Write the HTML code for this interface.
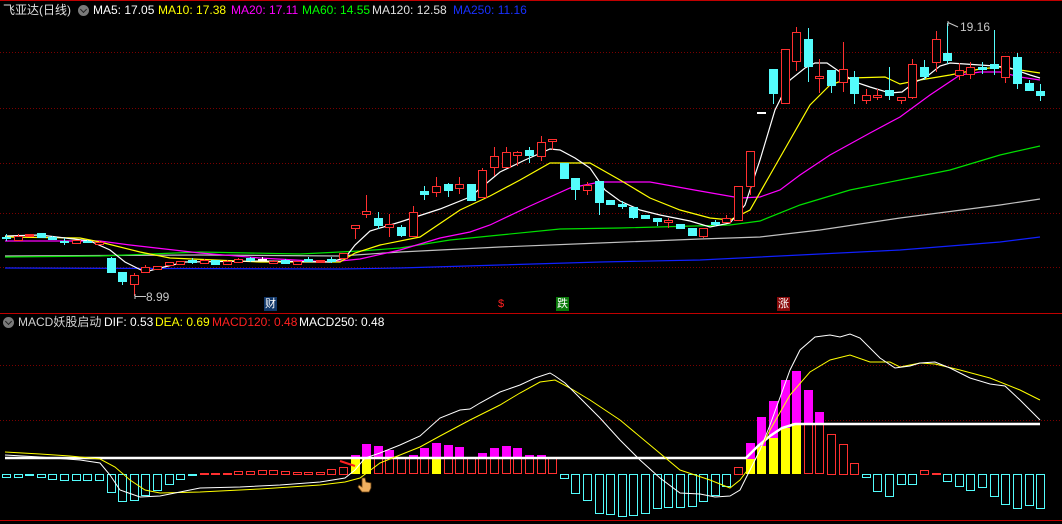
<!DOCTYPE html>
<html><head><meta charset="utf-8">
<style>
html,body{margin:0;padding:0;background:#000;width:1062px;height:524px;overflow:hidden;}
#wrap{position:relative;width:1062px;height:524px;font-family:"Liberation Sans","Noto Sans CJK SC",sans-serif;font-size:12px;}
svg{position:absolute;left:0;top:0;}
.t{position:absolute;white-space:nowrap;line-height:14px;}
.ic{position:absolute;width:11px;height:11px;border-radius:50%;background:#7a7a7a;}
.ic:after{content:"";position:absolute;left:3px;top:2px;width:4px;height:4px;border-right:1.5px solid #222;border-bottom:1.5px solid #222;transform:rotate(45deg);}
.box{position:absolute;width:13px;height:14px;color:#fff;font-size:11px;line-height:14px;text-align:center;}
</style></head><body>
<div id="wrap">
<svg id="s" width="1062" height="524" viewBox="0 0 1062 524"></svg>
<div class="t" style="left:3px;top:3px;color:#e0e0e0;">飞亚达(日线)</div>
<div class="ic" style="left:78px;top:5px;"></div>
<div class="t" style="left:93px;top:3px;color:#fff;">MA5: 17.05</div>
<div class="t" style="left:158px;top:3px;color:#ffff00;">MA10: 17.38</div>
<div class="t" style="left:231px;top:3px;color:#ff00ff;">MA20: 17.11</div>
<div class="t" style="left:302px;top:3px;color:#00ff00;">MA60: 14.55</div>
<div class="t" style="left:372px;top:3px;color:#e0e0e0;">MA120: 12.58</div>
<div class="t" style="left:453px;top:3px;color:#1830ff;">MA250: 11.16</div>
<div class="t" style="left:960px;top:20px;color:#c8c8c8;">19.16</div>
<div class="t" style="left:146px;top:290px;color:#c8c8c8;">8.99</div>
<div class="box" style="left:264px;top:297px;background:#12386a;">财</div>
<div class="box" style="left:556px;top:297px;background:#0a7a0a;">跌</div>
<div class="box" style="left:777px;top:297px;background:#8a0a0a;">涨</div>
<div class="t" style="left:498px;top:297px;color:#ff2020;font-size:11px;">$</div>
<div class="ic" style="left:3px;top:317px;"></div>
<div class="t" style="left:18px;top:315px;color:#d0d0d0;">MACD妖股启动</div>
<div class="t" style="left:104px;top:315px;color:#fff;">DIF: 0.53</div>
<div class="t" style="left:155px;top:315px;color:#ffff00;">DEA: 0.69</div>
<div class="t" style="left:212px;top:315px;color:#ff2020;">MACD120: 0.48</div>
<div class="t" style="left:299px;top:315px;color:#fff;">MACD250: 0.48</div>
</div>
<script>
var S=document.getElementById('s'),h='';
function L(x1,y1,x2,y2,c,w,d){h+='<line x1="'+x1+'" y1="'+y1+'" x2="'+x2+'" y2="'+y2+'" stroke="'+c+'" stroke-width="'+(w||1)+'"'+(d?' stroke-dasharray="'+d+'"':'')+'/>';}
function R(x,y,w,hh,f,s){h+='<rect x="'+x+'" y="'+y+'" width="'+w+'" height="'+Math.max(hh,1)+'" fill="'+(f||'none')+'"'+(s?' stroke="'+s+'" stroke-width="1"':'')+'/>';}
function P(pts,c,w){h+='<polyline fill="none" stroke="'+c+'" stroke-width="'+(w||1)+'" points="'+pts.map(function(p){return p.join(',')}).join(' ')+'"/>';}
L(0,0.5,1062,0.5,'#c00000',1);
L(0,313.5,1062,313.5,'#c00000',1);
L(0,520.5,1062,520.5,'#c00000',1);
[52,108,163,213,267,365,420].forEach(function(y){L(0,y+.5,1062,y+.5,'#7a0000',1,'1,2');});
function X(k){return 6+11.62*k;}
var RC='#ff3030',CC='#54fcfc';
var C=[[237,238,234,241,'c'],[236,240,234,241,'r'],[234,236,234,236,'rf'],[233,237,233,238,'c'],[237,239,236,240,'c'],[241,242,238,245,'c'],[240,243,240,243,'r'],[241,242,240,243,'c'],[242,244,241,244,'r'],[258,272,257,272,'c'],
[272,281,272,285,'c'],[275,284,273,296,'r'],[267,272,265,272,'r'],[266,269,266,269,'r'],[262,265,262,265,'r'],[261,264,261,264,'r'],[260,262,258,264,'c'],[260,263,259,264,'r'],[260,264,260,264,'c'],[261,264,260,265,'r'],
[259,262,258,262,'r'],[258,260,257,262,'c'],[259,260,257,261,'w'],[261,263,260,263,'r'],[260,263,259,263,'c'],[261,264,261,264,'r'],[259,261,257,262,'c'],[260,262,260,262,'rf'],[259,261,257,263,'c'],[253,258,253,259,'r'],
[225,228,225,239,'r'],[211,214,195,218,'r'],[218,225,212,229,'c'],[224,227,214,237,'r'],[227,235,225,237,'c'],[212,236,206,236,'r'],[191,194,186,200,'c'],[186,192,177,197,'r'],[184,190,183,197,'c'],[184,188,177,194,'r'],
[184,200,184,201,'c'],[170,197,168,197,'r'],[156,167,147,176,'r'],[152,167,147,167,'r'],[152,155,151,166,'r'],[150,155,147,163,'c'],[142,156,136,161,'r'],[139,141,139,150,'r'],[163,178,163,178,'c'],[178,189,178,200,'c'],
[185,190,182,195,'r'],[181,202,181,215,'c'],[200,204,200,205,'c'],[204,206,201,209,'c'],[207,217,207,219,'c'],[215,218,215,218,'c'],[218,221,218,226,'c'],[220,222,218,228,'r'],[224,228,224,228,'c'],[228,235,228,235,'c'],
[228,236,228,238,'r'],[222,224,220,226,'c'],[218,222,215,222,'r'],[186,220,186,220,'r'],[151,186,151,195,'r'],[112,113,112,113,'w'],[69,93,69,104,'c'],[49,103,49,103,'r'],[32,61,27,71,'r'],[39,66,28,82,'c'],
[76,78,59,93,'r'],[70,85,70,93,'c'],[69,82,42,92,'r'],[77,93,71,104,'c'],[95,100,89,104,'r'],[95,97,89,100,'r'],[90,95,67,100,'c'],[97,100,97,104,'r'],[64,97,59,99,'r'],[67,76,60,80,'c'],
[39,62,31,72,'r'],[53,60,23,64,'c'],[70,75,63,80,'r'],[67,74,62,79,'r'],[67,69,62,74,'c'],[64,68,30,75,'c'],[56,77,56,83,'r'],[57,83,53,89,'c'],[83,90,80,90,'c'],[91,95,84,101,'c']];
var MA=[
[[[5,236],[40,235],[90,241],[110,250],[125,262],[145,272],[160,268],[185,262],[260,261],[330,262],[345,258],[355,245],[370,231],[400,222],[440,209],[470,197],[500,172],[525,160],[550,149],[560,150],[575,158],[590,168],[605,190],[620,201],[640,210],[660,215],[690,221],[710,227],[730,223],[745,205],[760,160],[775,110],[790,80],[805,68],[815,63],[827,63],[840,72],[855,82],[870,87],[890,93],[902,92],[915,82],[925,78],[940,66],[950,63],[965,64],[995,66],[1010,68],[1030,75],[1040,78]],'#ffffff'],
[[[5,237],[80,238],[100,242],[140,252],[170,258],[260,262],[340,262],[355,253],[380,245],[420,237],[460,210],[490,196],[520,180],[550,163],[590,163],[620,180],[650,198],[680,210],[710,218],[730,220],[750,210],[770,175],[790,140],[810,105],[830,85],[850,78],[885,77],[900,84],[920,80],[950,75],[980,69],[1000,67],[1020,70],[1040,73]],'#ffff00'],
[[[5,241],[100,241],[130,245],[200,253],[260,258],[330,262],[360,259],[400,250],[440,238],[470,232],[490,225],[530,206],[570,188],[600,182],[650,182],[700,191],[740,198],[760,197],[780,190],[800,175],[830,155],[870,133],[900,117],[930,95],[960,75],[980,72],[1000,72],[1020,77],[1040,80]],'#ff00ff'],
[[[5,257],[100,256],[200,252],[300,254],[360,251],[400,248],[450,240],[500,235],[560,229],[620,228],[730,225],[760,221],[800,205],[850,190],[900,180],[950,170],[1000,155],[1040,146]],'#00e000'],
[[[5,256],[200,255],[340,256],[400,252],[500,247],[600,243],[700,239],[760,237],[820,230],[900,218],[1000,205],[1040,199]],'#c0c0c0'],
[[[5,268],[340,269],[400,268],[500,265],[600,262],[700,260],[800,255],[900,250],[1000,242],[1040,237]],'#1020ff']];
MA.slice().reverse().forEach(function(m){P(m[0],m[1],1.2);});
C.forEach(function(c,k){var x=Math.round(X(k)),t=c[0],b=c[1],hi=c[2],lo=c[3],ty=c[4];
 var col=ty=='c'?CC:ty=='w'?'#fff':RC;
 if(hi<t)L(x+.5,hi,x+.5,t,col);
 if(lo>b)L(x+.5,b,x+.5,lo,col);
 if(ty=='r')R(x-3.5,t+.5,8,b-t,'#000',col);
 else R(x-4,t,9,b-t+1,col);
});
// price markers
L(135,296.5,146,296.5,'#c8c8c8');L(135,294,135,299,'#c8c8c8');
L(948,22.5,958,27,'#c8c8c8');L(948,21,948,26,'#c8c8c8');
// MACD histogram
var H=[[0,'c',477],[1,'c',477],[2,'cf',476],[3,'c',477],[4,'c',479],[5,'c',480],[6,'c',480],[7,'c',480],[8,'c',480],[9,'c',492],[10,'c',501],[11,'c',500],[12,'c',495],[13,'c',490],[14,'c',484],[15,'c',479],[16,'cf',476],
[17,'r',473],[18,'rf',473],[19,'r',473],[20,'r',471],[21,'r',471],[22,'r',470],[23,'r',470],[24,'r',471],[25,'r',472],[26,'r',472],[27,'r',472],[28,'r',469],[29,'r',467],
[48,'c',478],[49,'c',493],[50,'c',500],[51,'c',513],[52,'c',514],[53,'c',516],[54,'c',515],[55,'c',513],[56,'c',508],[57,'c',507],[58,'c',507],[59,'c',506],[60,'c',501],[61,'c',495],[62,'c',486],[63,'r',467],
[71,'r',434],[72,'r',444],[73,'r',463],[74,'c',477],[75,'c',491],[76,'c',496],[77,'c',484],[78,'c',484],[79,'r',470],[80,'rf',473],[81,'c',481],[82,'c',486],[83,'c',490],[84,'c',487],[85,'c',496],[86,'c',504],[87,'c',508],[88,'c',505],[89,'c',508]];
H.forEach(function(b){var x=Math.round(X(b[0]))-4,ty=b[1],y=b[2];
 if(ty=='c')R(x+.5,474.5,8,y-474,'none',CC);
 else if(ty=='cf')R(x,474,9,y-474,CC);
 else if(ty=='r')R(x+.5,y+.5,8,474-y,'none',RC);
 else R(x,y,9,475-y,RC);
});
// mid section: magenta above line, red or yellow below
var M=[[30,455,'y'],[31,444,'y'],[32,446,'r'],[33,450,'r'],[34,457,'r'],[35,455,'r'],[36,448,'r'],[37,443,'y'],[38,445,'r'],[39,447,'r'],[40,458,'r'],[41,453,'r'],[42,448,'r'],[43,446,'r'],[44,448,'r'],[45,455,'r'],[46,455,'r'],[47,458,'r']];
M.forEach(function(b){var x=Math.round(X(b[0]))-4;
 if(b[1]<458)R(x,b[1],9,458-b[1],'#ff00ff');
 if(b[2]=='y')R(x,458,9,16,'#ffff00');else R(x+.5,458.5,8,15,'none',RC);
});
var M2=[[64,443,459,'y'],[65,417,446,'y'],[66,401,438,'y'],[67,380,428,'y'],[68,371,423,'y'],[69,390,423,'r'],[70,412,423,'r']];
M2.forEach(function(b){var x=Math.round(X(b[0]))-4;
 R(x,b[1],9,b[2]-b[1],'#ff00ff');
 if(b[3]=='y')R(x,b[2],9,474-b[2],'#ffff00');else R(x+.5,b[2]+.5,8,474-b[2]-1,'none',RC);
});
// white baseline
P([[5,458],[746,458],[758,446],[770,436],[782,428],[795,424],[1040,424]],'#ffffff',2.5);
// DEA yellow, DIF white
P([[5,452],[40,454],[70,456],[100,459],[115,467],[130,480],[145,490],[160,493],[200,492],[260,489],[320,485],[345,482],[360,478],[380,463],[400,455],[420,447],[440,436],[470,420],[500,405],[520,393],[540,382],[555,380],[570,388],[590,400],[620,420],[650,445],[680,470],[710,480],[730,488],[740,480],[755,460],[770,430],[790,395],[810,372],[830,360],[850,355],[870,362],[890,362],[900,367],[920,363],[935,364],[960,370],[990,378],[1020,390],[1040,400]],'#ffff00',1);
P([[5,455],[40,457],[80,460],[100,463],[110,475],[120,490],[140,497],[160,496],[180,492],[200,488],[240,487],[280,485],[320,482],[345,478],[355,470],[365,458],[380,453],[400,445],[420,436],[440,418],[460,410],[470,409],[480,403],[500,392],[520,385],[535,378],[550,373],[555,376],[565,383],[580,398],[600,418],[620,440],[640,460],[660,478],[680,493],[700,494],[715,497],[730,496],[740,490],[750,470],[760,450],[770,425],[790,370],[800,350],[815,337],[830,335],[840,337],[850,334],[860,338],[880,358],[895,368],[910,366],[920,363],[935,362],[950,368],[970,378],[990,384],[1005,386],[1020,400],[1040,420]],'#ffffff',1);
L(340,461,355,466,'#ff2020',2);
// hand cursor
h+='<path d="M362 478 L362 487 L359 485 L358 487 L362 492 L369 492 L371 488 L371 483 L366 482 L365 478 Z" fill="#f0b060" stroke="#6a4010" stroke-width="0.8"/>';
S.innerHTML=h;
</script>
</body></html>
